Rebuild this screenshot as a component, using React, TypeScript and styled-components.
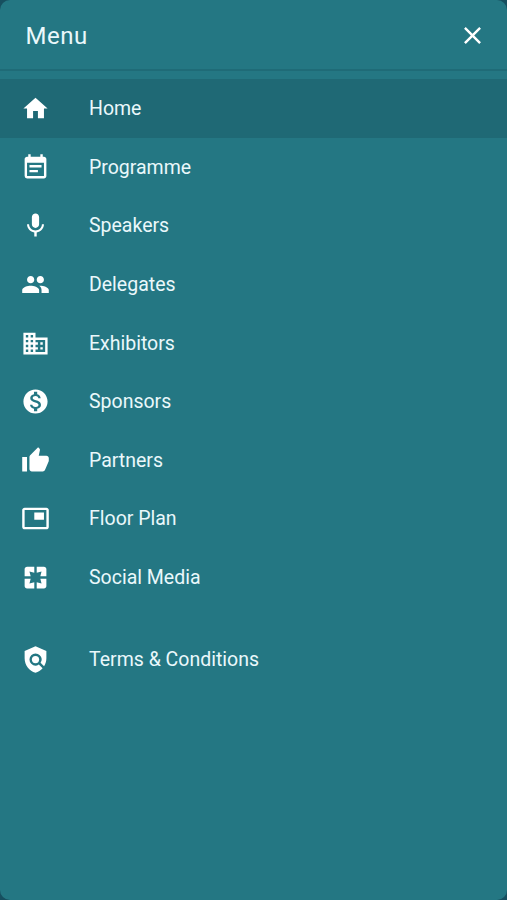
import React from "react";
import styled, { createGlobalStyle } from "styled-components";
import {
  MdHome, MdEventNote, MdMic, MdPeople, MdBusiness, MdMonetizationOn, MdThumbUp,
  MdPictureInPicture, MdPages, MdPolicy, MdClose,
} from "react-icons/md";
import type { IconType } from "react-icons";

const Global = createGlobalStyle`
  *, *::before, *::after { box-sizing: border-box; }
  body { margin: 0; background: #174f5f; font-family: Roboto, sans-serif; color: #eaf8fb; }
`;

const Panel = styled.main`
  height: 900px;
  background: #247783;
  border-radius: 10px;
  overflow: hidden;
`;

const Header = styled.header`
  height: 71px;
  padding: 2px 20px 0 25.5px;
  display: flex;
  align-items: center;
  justify-content: space-between;
  border-bottom: 2px solid #1f6b77;
`;

const Title = styled.h1`
  margin: 0;
  font-size: 24px;
  line-height: 28px;
  font-weight: 400;
  letter-spacing: 0.5px;
`;

const CloseButton = styled.button`
  display: flex;
  padding: 0;
  margin-bottom: 1px;
  border: 0;
  background: none;
  color: #fff;
  font-size: 29px;
`;

const List = styled.nav`
  padding-top: 8.4px;
`;

const Item = styled.a<{ $active?: boolean; $gap?: boolean }>`
  height: 58.6px;
  padding-left: 20.6px;
  margin-top: ${(p) => (p.$gap ? "23px" : "0")};
  display: flex;
  align-items: center;
  gap: 39.4px;
  font-size: 19.5px;
  background: ${(p) => (p.$active ? "#1f6975" : "transparent")};
  svg { width: 29px; height: 29px; flex: none; color: #fff; }
`;

const items: { label: string; icon: IconType; active?: boolean; gap?: boolean }[] = [
  { label: "Home", icon: MdHome, active: true },
  { label: "Programme", icon: MdEventNote },
  { label: "Speakers", icon: MdMic },
  { label: "Delegates", icon: MdPeople },
  { label: "Exhibitors", icon: MdBusiness },
  { label: "Sponsors", icon: MdMonetizationOn },
  { label: "Partners", icon: MdThumbUp },
  { label: "Floor Plan", icon: MdPictureInPicture },
  { label: "Social Media", icon: MdPages },
  { label: "Terms & Conditions", icon: MdPolicy, gap: true },
];

export default function App() {
  return (
    <>
      <Global />
      <Panel>
        <Header>
          <Title>Menu</Title>
          <CloseButton aria-label="Close"><MdClose /></CloseButton>
        </Header>
        <List>
          {items.map(({ label, icon: Icon, active, gap }) => (
            <Item key={label} $active={active} $gap={gap}>
              <Icon />
              <span>{label}</span>
            </Item>
          ))}
        </List>
      </Panel>
    </>
  );
}
